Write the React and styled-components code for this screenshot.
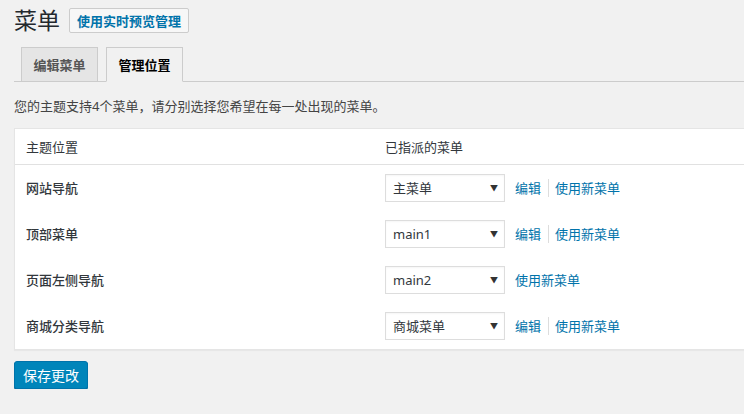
import React from 'react';
import styled, { createGlobalStyle } from 'styled-components';

const GlobalStyle = createGlobalStyle`
  html, body {
    margin: 0;
    padding: 0;
    background: #f1f1f1;
    overflow: hidden;
  }
  body {
    font-family: "Noto Sans", "Noto Sans CJK SC", sans-serif;
    font-size: 13px;
    color: #444;
  }
`;

const Wrap = styled.div`
  width: 760px;
  padding: 8px 0 0 14px;
  box-sizing: border-box;
`;

const Heading = styled.div`
  display: flex;
  align-items: center;
  gap: 9px;
  height: 25px;
`;

const Title = styled.h1`
  margin: 0;
  font-size: 23px;
  font-weight: 400;
  line-height: 25px;
  color: #23282d;
`;

const PreviewButton = styled.a`
  display: inline-flex;
  align-items: center;
  height: 25px;
  box-sizing: border-box;
  padding: 0 7px;
  border: 1px solid #ccc;
  border-radius: 2px;
  background: #f7f7f7;
  color: #0073aa;
  font-size: 13px;
  font-weight: 600;
  text-decoration: none;
`;

const TabBar = styled.div`
  display: flex;
  gap: 8px;
  margin-top: 14px;
  padding-left: 7px;
  border-bottom: 1px solid #ccc;
`;

const Tab = styled.a`
  display: flex;
  align-items: center;
  justify-content: center;
  width: 77px;
  height: 35px;
  box-sizing: border-box;
  margin-bottom: -1px;
  border: 1px solid #ccc;
  border-bottom-color: ${({ active }) => (active ? '#f1f1f1' : '#ccc')};
  background: ${({ active }) => (active ? '#f1f1f1' : '#e5e5e5')};
  color: ${({ active }) => (active ? '#000' : '#555')};
  font-size: 13px;
  font-weight: 600;
  text-decoration: none;
`;

const Description = styled.p`
  margin: 14px 0 0;
  line-height: 20px;
  color: #444;
`;

const Table = styled.div`
  margin-top: 12px;
  background: #fff;
  border: 1px solid #e5e5e5;
  box-shadow: 0 1px 1px rgba(0, 0, 0, 0.04);
`;

const Row = styled.div`
  display: grid;
  grid-template-columns: 359px 1fr;
  align-items: center;
  height: ${({ head }) => (head ? '35px' : '46px')};
  border-bottom: ${({ head }) => (head ? '1px solid #e1e1e1' : 'none')};
`;

const Cell = styled.div`
  display: flex;
  align-items: center;
  padding-left: 11px;
  color: #32373c;
  font-weight: ${({ label }) => (label ? 500 : 400)};
  line-height: 20px;
`;

const SelectBox = styled.div`
  position: relative;
  width: 120px;
  height: 28px;
`;

const Select = styled.select`
  appearance: none;
  width: 100%;
  height: 100%;
  box-sizing: border-box;
  padding: 0 20px 0 7px;
  border: 1px solid #ddd;
  border-radius: 0;
  background: #fff;
  color: #32373c;
  font-family: inherit;
  font-size: 13px;
  box-shadow: inset 0 1px 2px rgba(0, 0, 0, 0.04);
`;

const Arrow = styled.span`
  position: absolute;
  right: 7px;
  top: 50%;
  transform: translateY(-50%);
  font-size: 8px;
  color: #333;
  pointer-events: none;
`;

const Links = styled.div`
  display: flex;
  align-items: center;
  margin-left: 10px;
`;

const Link = styled.a`
  color: #0073aa;
  text-decoration: none;
`;

const Sep = styled.span`
  width: 1px;
  height: 18px;
  margin: 0 6px 0 7px;
  background: #ddd;
`;

const SaveButton = styled.button`
  margin-top: 11px;
  height: 28px;
  padding: 0 8px;
  border: 1px solid #0073aa;
  border-radius: 3px;
  background: #0085ba;
  color: #fff;
  font-family: inherit;
  font-size: 14px;
  box-shadow: 0 1px 0 #006799;
`;

const locations = [
  { name: '网站导航', menu: '主菜单', edit: true },
  { name: '顶部菜单', menu: 'main1', edit: true },
  { name: '页面左侧导航', menu: 'main2', edit: false },
  { name: '商城分类导航', menu: '商城菜单', edit: true },
];

const App = () => (
  <>
    <GlobalStyle />
    <Wrap>
      <Heading>
        <Title>菜单</Title>
        <PreviewButton href="#">使用实时预览管理</PreviewButton>
      </Heading>

      <TabBar>
        <Tab href="#">编辑菜单</Tab>
        <Tab href="#" active>管理位置</Tab>
      </TabBar>

      <Description>您的主题支持4个菜单，请分别选择您希望在每一处出现的菜单。</Description>

      <Table>
        <Row head>
          <Cell>主题位置</Cell>
          <Cell>已指派的菜单</Cell>
        </Row>
        {locations.map((loc) => (
          <Row key={loc.name}>
            <Cell label>{loc.name}</Cell>
            <Cell>
              <SelectBox>
                <Select defaultValue={loc.menu}>
                  <option>{loc.menu}</option>
                </Select>
                <Arrow>▼</Arrow>
              </SelectBox>
              <Links>
                {loc.edit && (
                  <>
                    <Link href="#">编辑</Link>
                    <Sep />
                  </>
                )}
                <Link href="#">使用新菜单</Link>
              </Links>
            </Cell>
          </Row>
        ))}
      </Table>

      <SaveButton>保存更改</SaveButton>
    </Wrap>
  </>
);

export default App;
